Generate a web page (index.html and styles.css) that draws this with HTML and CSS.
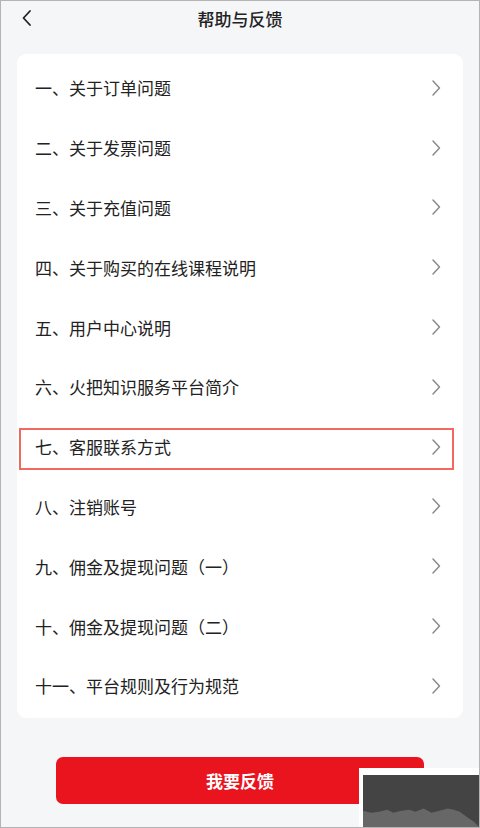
FILE: index.html
```html
<!DOCTYPE html>
<html lang="zh">
<head>
<meta charset="utf-8">
<link rel="stylesheet" href="styles.css">
</head>
<body>
<div class="screen">
  <header class="header">
    <svg class="back" width="12" height="18" viewBox="0 0 12 18"><path d="M9 2 L2.5 9 L9 16" fill="none" stroke="#222" stroke-width="1.8" stroke-linecap="round" stroke-linejoin="round"/></svg>
    <div class="title">帮助与反馈</div>
  </header>
  <div class="card">
    <div class="row"><span>一、关于订单问题</span><svg class="chev" width="12" height="18" viewBox="0 0 12 18"><path d="M3 2 L9.5 9 L3 16" fill="none" stroke="#8a8a8a" stroke-width="1.5" stroke-linecap="round" stroke-linejoin="round"/></svg></div>
    <div class="row"><span>二、关于发票问题</span><svg class="chev" width="12" height="18" viewBox="0 0 12 18"><path d="M3 2 L9.5 9 L3 16" fill="none" stroke="#8a8a8a" stroke-width="1.5" stroke-linecap="round" stroke-linejoin="round"/></svg></div>
    <div class="row"><span>三、关于充值问题</span><svg class="chev" width="12" height="18" viewBox="0 0 12 18"><path d="M3 2 L9.5 9 L3 16" fill="none" stroke="#8a8a8a" stroke-width="1.5" stroke-linecap="round" stroke-linejoin="round"/></svg></div>
    <div class="row"><span>四、关于购买的在线课程说明</span><svg class="chev" width="12" height="18" viewBox="0 0 12 18"><path d="M3 2 L9.5 9 L3 16" fill="none" stroke="#8a8a8a" stroke-width="1.5" stroke-linecap="round" stroke-linejoin="round"/></svg></div>
    <div class="row"><span>五、用户中心说明</span><svg class="chev" width="12" height="18" viewBox="0 0 12 18"><path d="M3 2 L9.5 9 L3 16" fill="none" stroke="#8a8a8a" stroke-width="1.5" stroke-linecap="round" stroke-linejoin="round"/></svg></div>
    <div class="row"><span>六、火把知识服务平台简介</span><svg class="chev" width="12" height="18" viewBox="0 0 12 18"><path d="M3 2 L9.5 9 L3 16" fill="none" stroke="#8a8a8a" stroke-width="1.5" stroke-linecap="round" stroke-linejoin="round"/></svg></div>
    <div class="row"><span>七、客服联系方式</span><svg class="chev" width="12" height="18" viewBox="0 0 12 18"><path d="M3 2 L9.5 9 L3 16" fill="none" stroke="#8a8a8a" stroke-width="1.5" stroke-linecap="round" stroke-linejoin="round"/></svg><div class="highlight"></div></div>
    <div class="row"><span>八、注销账号</span><svg class="chev" width="12" height="18" viewBox="0 0 12 18"><path d="M3 2 L9.5 9 L3 16" fill="none" stroke="#8a8a8a" stroke-width="1.5" stroke-linecap="round" stroke-linejoin="round"/></svg></div>
    <div class="row"><span>九、佣金及提现问题（一）</span><svg class="chev" width="12" height="18" viewBox="0 0 12 18"><path d="M3 2 L9.5 9 L3 16" fill="none" stroke="#8a8a8a" stroke-width="1.5" stroke-linecap="round" stroke-linejoin="round"/></svg></div>
    <div class="row"><span>十、佣金及提现问题（二）</span><svg class="chev" width="12" height="18" viewBox="0 0 12 18"><path d="M3 2 L9.5 9 L3 16" fill="none" stroke="#8a8a8a" stroke-width="1.5" stroke-linecap="round" stroke-linejoin="round"/></svg></div>
    <div class="row"><span>十一、平台规则及行为规范</span><svg class="chev" width="12" height="18" viewBox="0 0 12 18"><path d="M3 2 L9.5 9 L3 16" fill="none" stroke="#8a8a8a" stroke-width="1.5" stroke-linecap="round" stroke-linejoin="round"/></svg></div>
  </div>
  <div class="footer">
    <button class="btn">我要反馈</button>
  </div>
  <div class="video">
    <div class="video-inner">
      <svg width="117" height="53" viewBox="0 0 117 53" preserveAspectRatio="none"><path d="M0 35 L8 37 L16 36 L24 34 L30 37 L38 35 L46 34 L52 36 L60 33 L68 37 L76 35 L84 33 L90 34 L96 36 L104 42 L110 46 L117 53 L0 53 Z" fill="#676767"/></svg>
    </div>
  </div>
</div>
</body>
</html>
```
FILE: styles.css
```css
* { box-sizing: border-box; }
html, body { margin: 0; padding: 0; }
body {
  font-family: "Noto Sans CJK SC", "Noto Sans", sans-serif;
  background: #f5f6f8;
}
.screen {
  position: relative;
  width: 480px;
  height: 828px;
  border: 1px solid #b4b4b4;
  background: #f5f6f8;
  overflow: hidden;
}
.header {
  position: relative;
  height: 35px;
  display: flex;
  align-items: center;
  justify-content: center;
}
.back {
  position: absolute;
  left: 20px;
  top: 8px;
}
.title {
  font-size: 17px;
  font-weight: 500;
  color: #222;
  line-height: 35px;
}
.card {
  margin: 18px 16px 0 16px;
  background: #fff;
  border-radius: 9px;
  padding: 4px 0 2px 0;
}
.row {
  position: relative;
  height: 59.8px;
  display: flex;
  align-items: center;
  justify-content: space-between;
  padding: 0 21px 0 18px;
  font-size: 17px;
  color: #222;
}
.chev { display: block; }
.highlight {
  position: absolute;
  left: 2px;
  top: 11px;
  width: 435px;
  height: 42px;
  border: 2px solid #f3695f;
}
.footer {
  display: flex;
  justify-content: center;
  padding-top: 39px;
}
.btn {
  width: 368px;
  height: 47px;
  border: none;
  border-radius: 7px;
  background: #e9141e;
  color: #fff;
  font-family: "Noto Sans CJK SC", "Noto Sans", sans-serif;
  font-size: 17px;
  font-weight: 700;
}
.video {
  position: absolute;
  left: 358px;
  top: 767px;
  width: 122px;
  height: 61px;
  background: #fff;
  padding: 7px 0 0 4px;
}
.video-inner {
  width: 100%;
  height: 100%;
  background: #444;
  position: relative;
}
.video-inner svg {
  position: absolute;
  left: 0;
  bottom: 0;
  width: 100%;
  height: 100%;
  display: block;
}
```
